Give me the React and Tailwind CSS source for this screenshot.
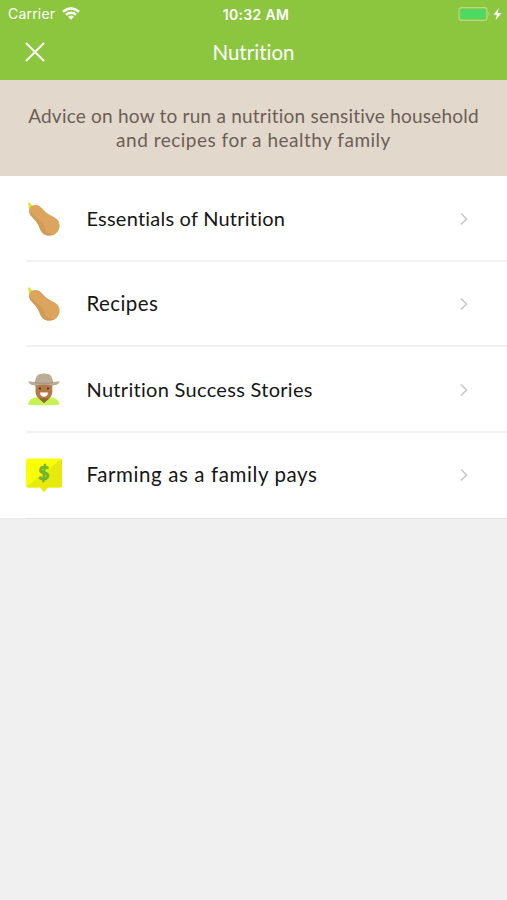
function Squash() {
  return (
    <svg viewBox="0 0 36 36" className="mt-0.5 h-9 w-9">
      <path d="M2 1.600 3.600 1.400 6.500 5.100 3 8Z" fill="#dcea22" />
      <path d="M3 9.500C3 6.500 5.500 4.200 9 4c3.300-.2 5.400 1.300 7.300 3.600 2.400 2.900 4.400 4.800 8.200 6.600 5.200 2.400 9.100 5 9.100 10.300 0 6-4.400 10-10.400 10-5 0-7.600-2.800-9.200-6.800-1.500-3.700-2.700-5.900-5-8.600C6.300 15.900 3 13.600 3 9.500Z" fill="#dba55e" />
      <path d="M3 9.500c0 4.100 3.300 6.400 6 9.600 2.300 2.700 3.500 4.900 5 8.600 1.600 4 4.200 6.800 9.200 6.800 2.200 0 4.100-.5 5.700-1.500-6 .2-9.500-2.500-10.500-7C17 20 8 16 3 9.500Z" fill="#d29b53" />
    </svg>
  );
}

function Farmer() {
  return (
    <svg viewBox="0 0 36 36" className="mt-0.5 h-9 w-9">
      <path d="M2 32.800C2.600 28.500 5 26.300 10 25.300h15.500c5 1 7.400 3.200 8 7.500-8 .6-23.500.6-31.500 0Z" fill="#c6f34f" />
      <path d="M9.500 11h16.800v9c0 3-2 6-4 7.500L18 31l-4.300-3.500c-2.200-1.500-4.200-4.500-4.200-7.500Z" fill="#b37a48" />
      <path d="M13 26.300h10L18 31Z" fill="#95623a" />
      <path d="M14 20.500h8c-.2 2.900-1.700 4.200-4 4.200s-3.800-1.300-4-4.200Z" fill="#fff" />
      <circle cx="14" cy="16.500" r="1.100" fill="#4b2c1c" />
      <circle cx="22" cy="16.500" r="1.100" fill="#4b2c1c" />
      <path d="M16.700 19.300 18 18l1.300 1.300Z" fill="#986036" />
      <path d="M9 10C9.600 5 11.500 2 14.500 2c1.500 0 2.200-.6 3.500-.6s2 .6 3.500.6c3 0 4.900 3 5.500 8l6.500-.8c.2 2.800-5.200 4.900-8.500 4.300-3.500-1-10.500-1-14 0-3.300.6-8.700-1.500-8.500-4.300Z" fill="#bcab97" />
      <path d="M9 9.500c4 1.700 14 1.700 18 0v1.500c-5 1.300-13 1.300-18 0Z" fill="#a89785" />
    </svg>
  );
}

function MoneyBubble() {
  return (
    <svg viewBox="0 0 36 36" className="mt-0.5 h-9 w-9">
      <path d="M2 1.500h32q2 0 2 2v25q0 2-2 2H22L18 35l-4-4.500H2q-2 0-2-2v-25q0-2 2-2Z" fill="#fbff05" />
      <path d="M35 2v0q1 .5 1 1.500v25q0 2-2 2H22L18 35l-4-4.500H2q-1 0-1.500-.8Z" fill="#e7eb0d" />
      <text x="17.800" y="22.500" textAnchor="middle" fontSize="19" fontWeight="900" fill="#6fb52f" stroke="#6fb52f" strokeWidth=".7" className="font-['Lato',sans-serif]">$</text>
    </svg>
  );
}

function Row({ icon, label, spacing, last }) {
  return (
    <div className="flex h-[85.500px] pl-[26px]">
      <div className={`flex flex-1 items-center border-b-2 ${last ? "border-transparent" : "border-[#f1f1f1]"}`}>
        {icon}
        <span className={`ml-[24.500px] flex-1 whitespace-nowrap leading-6 text-[#161616] ${spacing}`}>{label}</span>
        <svg viewBox="0 0 8 14" className="mr-[39px] mt-0.5 h-[14px] w-2" fill="none" stroke="#c9c9cb" strokeWidth="1.700">
          <path d="m1 1.500 5.500 5.500L1 12.500" />
        </svg>
      </div>
    </div>
  );
}

export default function App() {
  return (
    <div className="h-[900px] w-[507px] overflow-hidden bg-[#f0f0f0] font-['Lato',sans-serif]">
      <header className="h-[79.500px] bg-[#8cc63f] text-white">
        <div className="grid h-[27px] grid-cols-3 items-center pl-2 pr-[5px] font-['Inter',sans-serif] text-[14px]">
          <div className="flex items-center gap-[7px]">
            <span className="tracking-[0.200px]">Carrier</span>
            <svg viewBox="0 0 18 13" className="h-[13px] w-[18px]" fill="none" stroke="#fff" strokeWidth="2.500">
              <path d="M1 4.700Q9-2 17 4.700M3.900 7.800q5.100-4.200 10.200 0" />
              <path d="M6 9.800q3-2.400 6 0l-3 3Z" fill="#fff" stroke="none" />
            </svg>
          </div>
          <span className="whitespace-nowrap pl-0.5 pt-px text-center text-[14px] font-semibold tracking-[0.350px]">10:32 AM</span>
          <div className="flex items-center justify-end">
            <svg viewBox="0 0 44 14" className="h-[14px] w-11">
              <rect x="1" y=".7" width="28" height="12.600" rx="2.500" fill="none" stroke="#b6db83" strokeWidth="1.200" />
              <rect x="2.500" y="2.200" width="25" height="9.600" rx="1" fill="#4cd964" />
              <path d="M30.500 4.700q2 2.300 0 4.600Z" fill="#b6db83" />
              <path d="M40.800 1 35.500 7.800h3.300L37.500 13.200l6-7.200h-3.800Z" fill="#fff" />
            </svg>
          </div>
        </div>
        <div className="grid h-[50px] grid-cols-[1fr_auto_1fr] items-center pl-[25px] pr-[25px]">
          <svg viewBox="0 0 20 20" className="h-5 w-5" fill="none" stroke="#fff" strokeWidth="1.800">
            <path d="m1 1 18 18M19 1 1 19" />
          </svg>
          <h1 className="text-[20.500px] leading-6 tracking-[0.020px]">Nutrition</h1>
          <span />
        </div>
      </header>
      <section className="flex h-[96.500px] flex-col items-center bg-[#e3d8cc] pt-[24.500px] text-[19px] leading-6 text-[#6b5f56]">
        <p className="whitespace-nowrap tracking-[0.220px]">Advice on how to run a nutrition sensitive household</p>
        <p className="whitespace-nowrap tracking-[0.500px]">and recipes for a healthy family</p>
      </section>
      <main className="bg-white">
        <Row icon={<Squash />} label="Essentials of Nutrition" spacing="text-[20px] tracking-[0.220px]" />
        <Row icon={<Squash />} label="Recipes" spacing="text-[20.500px] tracking-[0.400px]" />
        <Row icon={<Farmer />} label="Nutrition Success Stories" spacing="text-[20px] tracking-[0.300px]" />
        <Row last icon={<MoneyBubble />} label="Farming as a family pays" spacing="text-[20.500px] tracking-[0.600px]" />
      </main>
      <div className="ml-[26px] h-px bg-[#e2e2e2]" />
    </div>
  );
}
